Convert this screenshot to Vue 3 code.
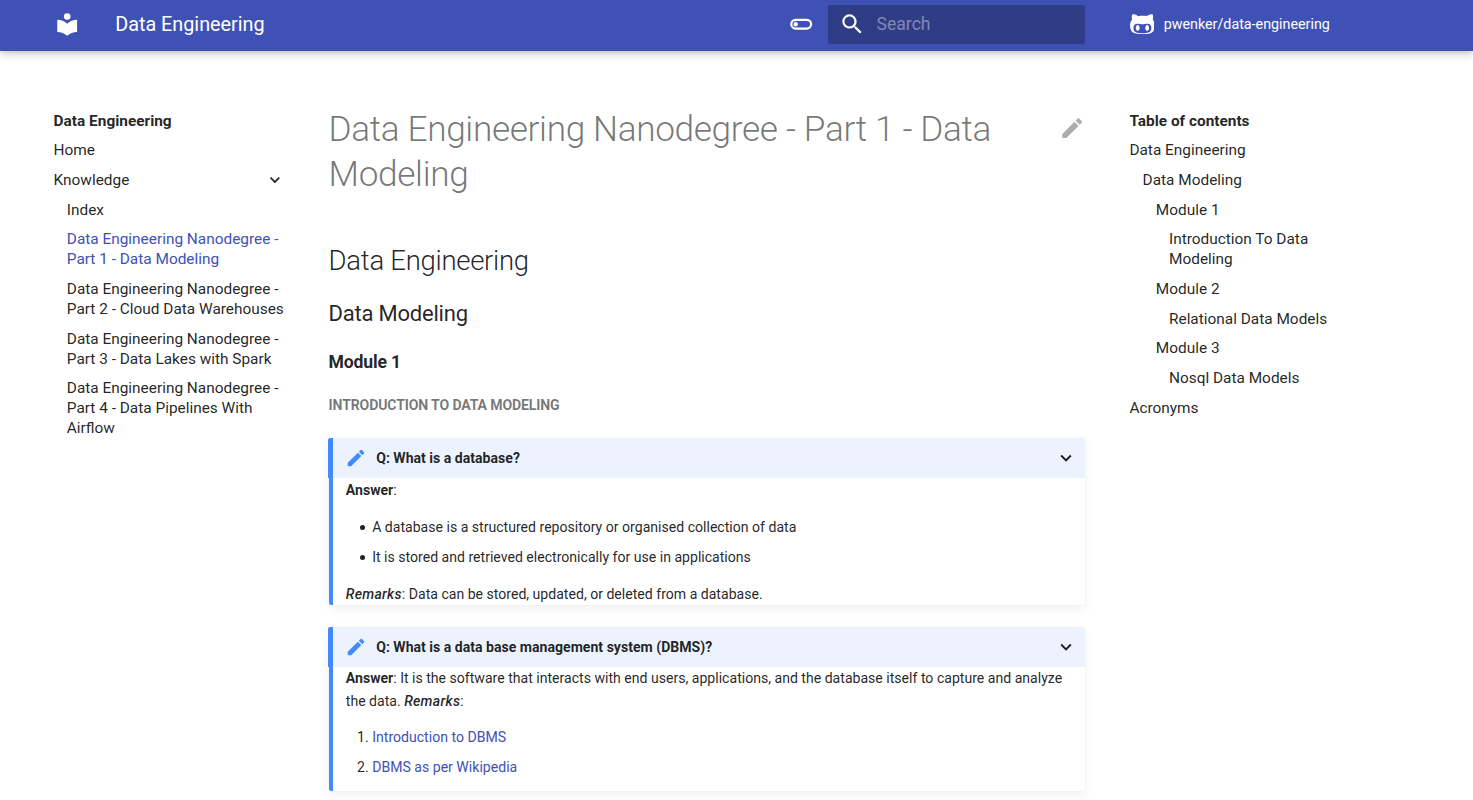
<script setup>
const icons = {
  library: 'M12 8a3 3 0 0 0 3-3 3 3 0 0 0-3-3 3 3 0 0 0-3 3 3 3 0 0 0 3 3m0 3.54C9.64 9.35 6.5 8 3 8v11c3.5 0 6.64 1.35 9 3.54 2.36-2.19 5.5-3.54 9-3.54V8c-3.5 0-6.64 1.35-9 3.54z',
  toggle: 'M7 10a2 2 0 1 1 0 4 2 2 0 0 1 0-4m10-3a5 5 0 0 1 0 10H7A5 5 0 0 1 7 7h10M7 9a3 3 0 0 0 0 6h10a3 3 0 0 0 0-6H7z',
  search: 'M9.5 3A6.5 6.5 0 0 1 16 9.5c0 1.61-.59 3.09-1.56 4.23l.27.27h.79l5 5-1.5 1.5-5-5v-.79l-.27-.27A6.516 6.516 0 0 1 9.5 16 6.5 6.5 0 0 1 3 9.5 6.5 6.5 0 0 1 9.5 3m0 2C7 5 5 7 5 9.5S7 14 9.5 14 14 12 14 9.5 12 5 9.5 5z',
  pencil: 'M20.71 7.04c.39-.39.39-1.04 0-1.41l-2.34-2.34c-.37-.39-1.02-.39-1.41 0l-1.84 1.83 3.75 3.75M3 17.25V21h3.75L17.81 9.93l-3.75-3.75L3 17.25z',
  chevron: 'M7.41 8.58 12 13.17l4.59-4.59L18 10l-6 6-6-6 1.41-1.42z',
  github: 'M186.1 328.7c0 20.9-10.9 55.1-36.7 55.1s-36.7-34.2-36.7-55.1 10.9-55.1 36.7-55.1 36.7 34.2 36.7 55.1zM480 278.2c0 31.9-3.2 65.7-17.5 95-37.9 76.6-142.1 74.8-216.7 74.8-75.8 0-186.2 2.7-225.6-74.8-14.6-29-20.2-63.1-20.2-95 0-41.9 13.9-81.5 41.5-113.6-5.2-15.8-7.7-32.4-7.7-48.8 0-21.5 4.9-32.3 14.6-51.8 45.3 0 74.3 9 108.8 36 29-6.9 58.8-10 88.7-10 27 0 54.2 2.9 80.4 9.2 34-26.7 63-35.2 107.8-35.2 9.8 19.5 14.6 30.3 14.6 51.8 0 16.4-2.6 32.7-7.7 48.2 27.5 32.4 39 72.3 39 114.2zm-64.3 50.5c0-43.9-26.7-82.6-73.5-82.6-18.9 0-37 3.4-56 6-14.9 2.3-29.8 3.2-45.1 3.2-15.2 0-30.1-.9-45.1-3.2-18.7-2.6-37-6-56-6-46.8 0-73.5 38.7-73.5 82.6 0 87.8 80.4 101.3 150.4 101.3h48.2c70.3 0 150.6-13.4 150.6-101.3zm-82.6-55.1c-25.8 0-36.7 34.2-36.7 55.1s10.9 55.1 36.7 55.1 36.7-34.2 36.7-55.1-10.9-55.1-36.7-55.1z',
}

const nav = [
  { text: 'Home' },
  { text: 'Knowledge', open: true },
  { text: 'Index', sub: true },
  { text: 'Data Engineering Nanodegree - Part 1 - Data Modeling', sub: true, active: true },
  { text: 'Data Engineering Nanodegree - Part 2 - Cloud Data Warehouses', sub: true },
  { text: 'Data Engineering Nanodegree - Part 3 - Data Lakes with Spark', sub: true },
  { text: 'Data Engineering Nanodegree - Part 4 - Data Pipelines With Airflow', sub: true },
]

const toc = [
  { text: 'Data Engineering', level: 0 },
  { text: 'Data Modeling', level: 1 },
  { text: 'Module 1', level: 2 },
  { text: 'Introduction To Data Modeling', level: 3 },
  { text: 'Module 2', level: 2 },
  { text: 'Relational Data Models', level: 3 },
  { text: 'Module 3', level: 2 },
  { text: 'Nosql Data Models', level: 3 },
  { text: 'Acronyms', level: 0 },
]
</script>

<template>
  <div class="page">
    <header class="header">
      <svg class="icon logo" viewBox="0 0 24 24"><path :d="icons.library" /></svg>
      <span class="site">Data Engineering</span>
      <svg class="icon toggle" viewBox="0 0 24 24"><path :d="icons.toggle" /></svg>
      <div class="search">
        <svg class="icon" viewBox="0 0 24 24"><path :d="icons.search" /></svg>
        <span class="placeholder">Search</span>
      </div>
      <a class="repo">
        <svg class="octo" viewBox="0 0 480 512"><path :d="icons.github" /></svg>
        <span>pwenker/data-engineering</span>
      </a>
    </header>

    <div class="main">
      <nav class="side">
        <div class="side-title">Data Engineering</div>
        <div v-for="n in nav" :key="n.text" class="item" :class="{ sub: n.sub, active: n.active, parent: n.open }">
          <span>{{ n.text }}</span>
          <svg v-if="n.open" class="caret" viewBox="0 0 24 24"><path :d="icons.chevron" /></svg>
        </div>
      </nav>

      <article class="content">
        <div class="title-row">
          <h1>Data Engineering Nanodegree - Part 1 - Data Modeling</h1>
          <svg class="icon edit" viewBox="0 0 24 24"><path :d="icons.pencil" /></svg>
        </div>
        <h2>Data Engineering</h2>
        <h3>Data Modeling</h3>
        <h4>Module 1</h4>
        <h5>Introduction To Data Modeling</h5>

        <section class="card">
          <div class="summary">
            <svg class="note" viewBox="0 0 24 24"><path :d="icons.pencil" /></svg>
            <span>Q: What is a database?</span>
            <svg class="more" viewBox="0 0 24 24"><path :d="icons.chevron" /></svg>
          </div>
          <p class="lead"><strong>Answer</strong>:</p>
          <ul>
            <li>A database is a structured repository or organised collection of data</li>
            <li>It is stored and retrieved electronically for use in applications</li>
          </ul>
          <p><em>Remarks</em>: Data can be stored, updated, or deleted from a database.</p>
        </section>

        <section class="card padded">
          <div class="summary">
            <svg class="note" viewBox="0 0 24 24"><path :d="icons.pencil" /></svg>
            <span>Q: What is a data base management system (DBMS)?</span>
            <svg class="more" viewBox="0 0 24 24"><path :d="icons.chevron" /></svg>
          </div>
          <p><strong>Answer</strong>: It is the software that interacts with end users, applications, and the database itself to capture and analyze the data. <em>Remarks</em>:</p>
          <ol>
            <li><a>Introduction to DBMS</a></li>
            <li><a>DBMS as per Wikipedia</a></li>
          </ol>
        </section>
      </article>

      <nav class="toc">
        <div class="side-title">Table of contents</div>
        <div v-for="t in toc" :key="t.text" class="item" :class="'level' + t.level">{{ t.text }}</div>
      </nav>
    </div>
  </div>
</template>

<style>
html { font-size: 22px; }
body { margin: 0; overflow: hidden; }
</style>

<style scoped>
.page {
  height: 800px;
  overflow: hidden;
  background: #fff;
  color: rgba(0, 0, 0, 0.87);
  font-family: Roboto, "Liberation Sans", sans-serif;
  -webkit-font-smoothing: antialiased;
}
svg { display: block; fill: currentColor; flex: none; }
.icon { width: 1.2rem; height: 1.2rem; }
.header {
  position: relative;
  display: flex;
  align-items: center;
  box-sizing: border-box;
  height: 51px;
  padding: 0 40.5px 2.4px 53.6px;
  background: #4051b5;
  color: #fff;
  box-shadow: 0 0 0.2rem rgba(0, 0, 0, 0.1), 0 0.2rem 0.4rem rgba(0, 0, 0, 0.2);
}
.site { flex: 1; margin-left: 35.2px; font-size: 0.9rem; }
.toggle { margin-right: 13.6px; }
.search {
  display: flex;
  align-items: center;
  box-sizing: border-box;
  width: 257px;
  height: 39.6px;
  padding-left: 10.8px;
  border-radius: 0.1rem;
  background: rgba(0, 0, 0, 0.26);
}
.placeholder { margin-left: 11.3px; font-size: 0.8rem; color: rgba(255, 255, 255, 0.4); }
.repo {
  display: flex;
  align-items: center;
  width: 303px;
  margin-left: 44.5px;
  font-size: 0.65rem;
}
.octo { width: 24.75px; height: 26.4px; margin-right: 9.4px; }

.main { display: flex; padding: 55px 0 0 53.6px; }
.side, .toc { padding-top: 4.8px; font-size: 0.7rem; line-height: 1.3; }
.side { width: 231px; margin-right: 44px; }
.toc { width: 217px; margin-left: 44.3px; }
.side-title { font-weight: 700; }
.item { margin-top: 0.625em; }
.parent { display: flex; justify-content: space-between; align-items: center; }
.caret { width: 0.9rem; height: 0.9rem; margin-right: -0.2px; }
.side .sub { padding-left: 0.6rem; }
.active { color: #4051b5; }
.level1 { padding-left: 0.6rem; }
.level2 { padding-left: 1.2rem; }
.level3 { padding-left: 1.8rem; }

.content { width: 756.5px; font-size: 0.8rem; line-height: 1.6; }
.title-row { display: flex; justify-content: space-between; padding-top: 1.2px; margin-bottom: 44px; }
.edit { margin-top: 7.6px; color: rgba(0, 0, 0, 0.32); }
h1, h2, h3, h4, h5 { margin: 0; letter-spacing: -0.01em; }
h1 { width: 700px; font-size: 2em; font-weight: 300; line-height: 45.2px; color: rgba(0, 0, 0, 0.54); }
h2 { font-size: 1.5625em; font-weight: 300; line-height: 1.4; }
h3 { margin: 17.1px 0 18px; font-size: 1.25em; font-weight: 400; line-height: 1.5; }
h4 { font-size: 1em; font-weight: 700; }
h5 { margin-top: 1.25em; font-size: 0.8em; font-weight: 700; text-transform: uppercase; color: rgba(0, 0, 0, 0.54); }

.card {
  margin-top: 1.5625em;
  padding: 0 0.6rem;
  border-left: 0.2rem solid #448aff;
  border-radius: 0.1rem;
  font-size: 0.64rem;
  box-shadow: 0 0.2rem 0.5rem rgba(0, 0, 0, 0.05), 0 0 0.05rem rgba(0, 0, 0, 0.1);
}
.padded { padding-bottom: 0.6rem; }
.summary {
  display: flex;
  align-items: center;
  box-sizing: border-box;
  height: 39.9px;
  margin: 0 -0.6rem 0 -0.8rem;
  padding: 0 8px 0 12.2px;
  border-left: 5px solid #448aff;
  border-top-left-radius: 0.1rem;
  border-top-right-radius: 0.1rem;
  background: #ecf3ff;
  font-weight: 700;
}
.summary span { flex: 1; margin-left: 8.8px; }
.note, .more { width: 1rem; height: 1rem; }
.note { color: #448aff; }
p { margin: 0; }
.lead { padding-top: 0.4px; }
em { font-weight: 500; font-style: italic; letter-spacing: 0.27px; }
ul, ol { margin: 14.2px 0 0 0.625em; padding: 0; }
ul { margin: 14.5px 0 14.3px 0.625em; list-style: none; }
li { margin: 0 0 0.5em 1.25em; }
ul li { margin-bottom: 7.54px; }
li:last-child { margin-bottom: 0; }
ul li::before {
  content: "";
  display: inline-block;
  width: 5px;
  height: 5px;
  margin: 0 7.2px 0 -12.2px;
  border-radius: 50%;
  background: currentColor;
  vertical-align: 2px;
}
a { color: #4051b5; }
.repo { color: #fff; }
</style>
